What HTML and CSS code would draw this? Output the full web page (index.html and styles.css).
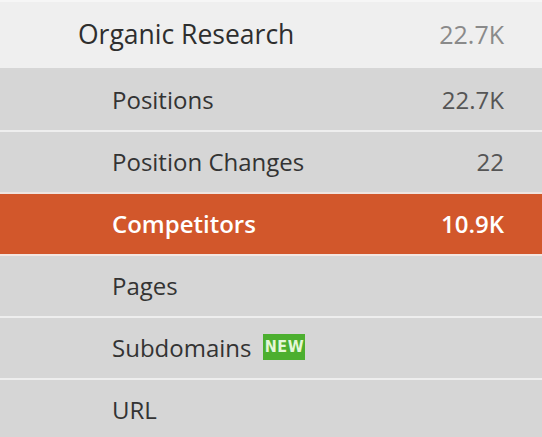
FILE: index.html
```html
<!DOCTYPE html>
<html>
<head>
<meta charset="utf-8">
<link rel="stylesheet" href="styles.css">
</head>
<body>
<nav class="menu">
  <div class="item top">
    <span class="label">Organic Research</span>
    <span class="count">22.7K</span>
  </div>
  <ul class="sub">
    <li class="item first"><span class="label">Positions</span><span class="count">22.7K</span></li>
    <li class="item"><span class="label">Position Changes</span><span class="count">22</span></li>
    <li class="item active"><span class="label">Competitors</span><span class="count">10.9K</span></li>
    <li class="item"><span class="label">Pages</span></li>
    <li class="item"><span class="label">Subdomains <span class="badge">NEW</span></span></li>
    <li class="item"><span class="label">URL</span></li>
  </ul>
</nav>
</body>
</html>
```

FILE: styles.css
```css
html, body {
  margin: 0;
  padding: 0;
  background: #d6d6d6;
}
body {
  font-family: "Open Sans", "Noto Sans", sans-serif;
  height: 437px;
  overflow: hidden;
}
.menu {
  width: 542px;
}
.item {
  display: flex;
  align-items: center;
  justify-content: space-between;
  box-sizing: border-box;
}
.top {
  height: 68px;
  background: #efefef;
  border-top: 2px solid #f6f6f6;
  padding: 0 38px 2px 78px;
  font-size: 26.5px;
  color: #2e2e2e;
}
.top .count {
  color: #8a8a8a;
  font-size: 25px;
}
.sub {
  list-style: none;
  margin: 0;
  padding: 0;
}
.sub .item {
  height: 62px;
  border-top: 2px solid #eeeeee;
  background: #d6d6d6;
  padding: 0 38px 2px 112px;
  font-size: 24px;
  color: #333;
}
.sub .item.first {
  border-top-color: #d6d6d6;
}
.sub .count {
  color: #555;
}
.sub .item.active {
  background: #d2572b;
  border-top-color: #efe4e0;
  color: #fff;
  font-weight: 600;
}
.sub .item.active .count {
  color: #fff;
}
.sub .item.active + .item {
  border-top-color: #f3e6e1;
}
.label {
  display: flex;
  align-items: center;
}
.badge {
  display: inline-block;
  margin-left: 12px;
  width: 42px;
  height: 26px;
  line-height: 26px;
  text-align: center;
  background: #4caf2f;
  color: #e4f7d8;
  font-family: "DejaVu Sans Condensed", "DejaVu Sans", sans-serif;
  font-size: 16px;
  font-weight: 700;
  letter-spacing: 0.5px;
}
```
